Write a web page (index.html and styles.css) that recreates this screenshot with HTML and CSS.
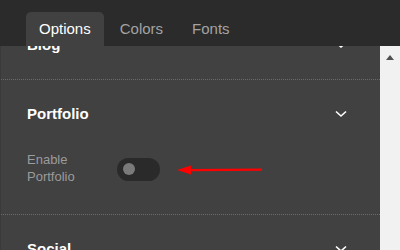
FILE: index.html
```html
<!DOCTYPE html>
<html>
<head>
<meta charset="utf-8">
<link rel="stylesheet" href="styles.css">
</head>
<body>
<div class="app">
  <div class="tabs">
    <div class="tab active">Options</div>
    <div class="tab">Colors</div>
    <div class="tab">Fonts</div>
  </div>
  <div class="main">
    <div class="viewport">
      <div class="list">
        <div class="section">
          <div class="head">
            <span class="title">Blog</span>
            <svg class="chev" width="12" height="8" viewBox="0 0 12 8"><path d="M1 1.5 L6 6 L11 1.5" fill="none" stroke="#fff" stroke-width="1.6"/></svg>
          </div>
        </div>
        <div class="section">
          <div class="head">
            <span class="title">Portfolio</span>
            <svg class="chev" width="12" height="8" viewBox="0 0 12 8"><path d="M1 1.5 L6 6 L11 1.5" fill="none" stroke="#fff" stroke-width="1.6"/></svg>
          </div>
          <div class="field">
            <span class="label">Enable Portfolio</span>
            <span class="toggle"><span class="knob"></span></span>
            <svg class="arrow" width="86" height="12" viewBox="0 0 86 12"><path d="M0 6 L14 1.5 L14 10.5 Z" fill="#ff0000"/><path d="M12 6.2 L85 5.6" stroke="#ff0000" stroke-width="2.2"/></svg>
          </div>
        </div>
        <div class="section">
          <div class="head">
            <span class="title">Social</span>
            <svg class="chev" width="12" height="8" viewBox="0 0 12 8"><path d="M1 1.5 L6 6 L11 1.5" fill="none" stroke="#fff" stroke-width="1.6"/></svg>
          </div>
        </div>
      </div>
    </div>
    <div class="scrollbar"><span class="up"></span></div>
  </div>
</div>
</body>
</html>
```

FILE: styles.css
```css
html, body {
  margin: 0;
  padding: 0;
  background: #2b2b2b;
}
.app {
  width: 400px;
  height: 250px;
  display: flex;
  flex-direction: column;
  font-family: "Liberation Sans", Arial, sans-serif;
  overflow: hidden;
}
.tabs {
  height: 46px;
  flex: none;
  display: flex;
  align-items: flex-end;
  gap: 3px;
  padding-left: 26px;
  background: #2b2b2b;
  box-sizing: border-box;
}
.tab {
  height: 34px;
  line-height: 34px;
  padding: 0 13px;
  font-size: 15px;
  color: #a3a3a3;
  border-radius: 5px 5px 0 0;
}
.tab.active {
  background: #414141;
  color: #ffffff;
}
.main {
  flex: 1;
  display: flex;
  min-height: 0;
}
.viewport {
  width: 380px;
  flex: none;
  background: #414141;
  border-left: 1px solid #3a3a3a;
  box-sizing: border-box;
  overflow: hidden;
}
.list {
  margin-top: -35px;
  margin-left: -1px;
}
.section {
  border-bottom: 1px dotted #6b6b6b;
}
.head {
  display: flex;
  justify-content: space-between;
  align-items: center;
  padding: 24px 33px 24px 27px;
  height: 20px;
}
.title {
  font-size: 15px;
  line-height: 20px;
  font-weight: bold;
  color: #ffffff;
}
.chev {
  display: block;
}
.field {
  display: flex;
  align-items: center;
  padding: 3px 0 29px 27px;
}
.label {
  width: 80px;
  font-size: 13px;
  line-height: 17px;
  color: #9b9b9b;
}
.toggle {
  margin-left: 10px;
  width: 43px;
  height: 23px;
  border-radius: 12px;
  background: #2a2a2a;
  display: flex;
  align-items: center;
  padding-left: 6px;
  box-sizing: border-box;
  margin-top: 2px;
}
.knob {
  width: 12px;
  height: 12px;
  border-radius: 50%;
  background: #7a7a7a;
}
.arrow {
  display: block;
  margin-left: 17px;
  margin-top: 4px;
}
.scrollbar {
  flex: 1;
  background: #f1f1f1;
  display: flex;
  justify-content: center;
  padding-top: 9px;
  box-sizing: border-box;
}
.up {
  width: 0;
  height: 0;
  border-left: 4.5px solid transparent;
  border-right: 4.5px solid transparent;
  border-bottom: 5px solid #505050;
}
```
